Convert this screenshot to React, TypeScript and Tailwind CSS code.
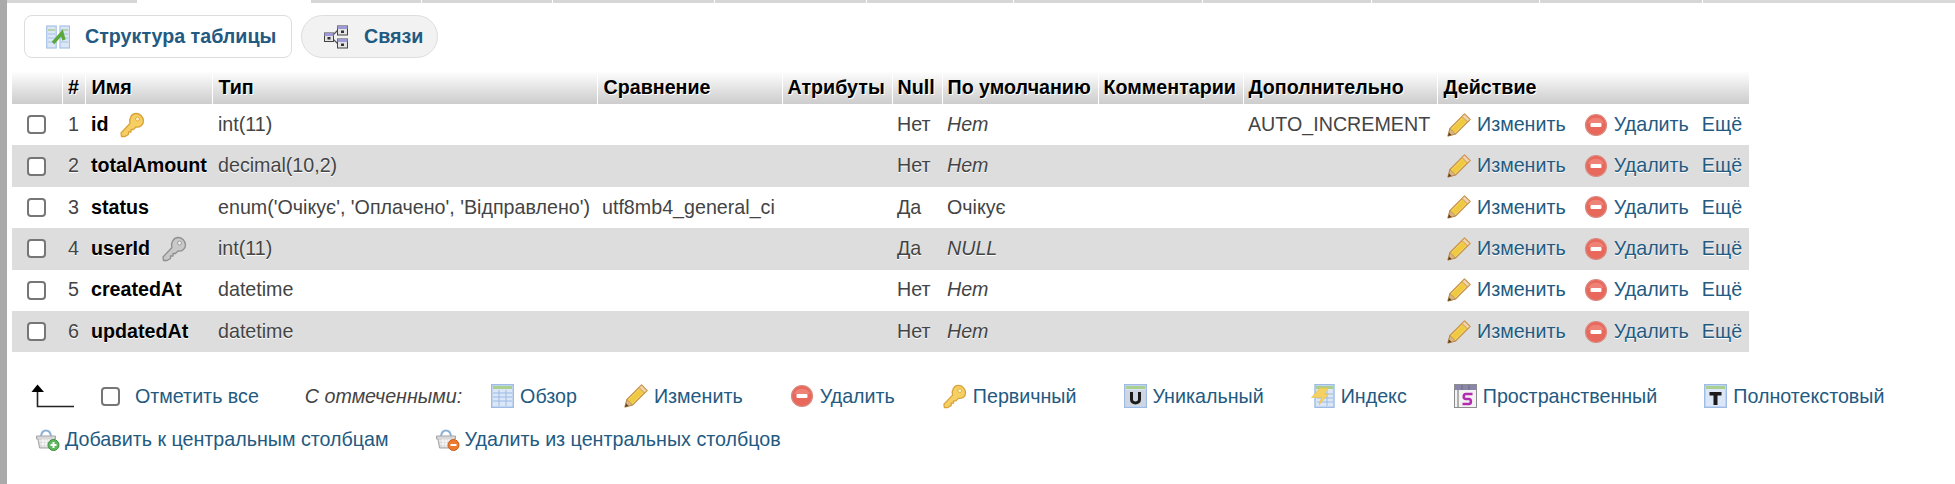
const tabs = [
  'w-[130px]',
  'w-[172px] bg-white',
  'w-[110px]',
  'w-[130px]',
  'w-[161px]',
  'w-[151px]',
  'w-[146px]',
  'w-[188px]',
  'w-[168px]',
  'w-[167px]',
  'w-[162px]',
];

type Row = {
  num: number;
  name: string;
  key?: 'primary' | 'foreign';
  type: string;
  collation?: string;
  isNull: string;
  def: string;
  defItalic: boolean;
  extra?: string;
};

const rows: Row[] = [
  { num: 1, name: 'id', key: 'primary', type: 'int(11)', isNull: 'Нет', def: 'Нет', defItalic: true, extra: 'AUTO_INCREMENT' },
  { num: 2, name: 'totalAmount', type: 'decimal(10,2)', isNull: 'Нет', def: 'Нет', defItalic: true },
  { num: 3, name: 'status', type: "enum('Очікує', 'Оплачено', 'Відправлено')", collation: 'utf8mb4_general_ci', isNull: 'Да', def: 'Очікує', defItalic: false },
  { num: 4, name: 'userId', key: 'foreign', type: 'int(11)', isNull: 'Да', def: 'NULL', defItalic: true },
  { num: 5, name: 'createdAt', type: 'datetime', isNull: 'Нет', def: 'Нет', defItalic: true },
  { num: 6, name: 'updatedAt', type: 'datetime', isNull: 'Нет', def: 'Нет', defItalic: true },
];

function PencilIcon() {
  return (
    <svg width="24" height="24" viewBox="0 0 24 24" className="shrink-0">
      <path d="M17.5 1 L23 6.5 L8.5 21 L1 23 L3 15.5 Z" fill="#f5dc6a" stroke="#c9924a" strokeWidth="1.2" strokeLinejoin="round" />
      <path d="M15.5 5 L19 8.5 L7.5 20 L4 16.5 Z" fill="#efc93f" />
      <path d="M17.5 1 L23 6.5 L20.5 9 L15 3.5 Z" fill="#f1d3ae" stroke="#c9924a" strokeWidth="1" strokeLinejoin="round" />
      <path d="M3 15.5 L8.5 21 L1 23 Z" fill="#d9b583" stroke="#a8773f" strokeWidth="0.6" />
      <path d="M2 19.5 L4.5 22 L1 23 Z" fill="#5a3d20" />
    </svg>
  );
}

function DeleteIcon() {
  return (
    <svg width="24" height="24" viewBox="0 0 24 24" className="shrink-0">
      <circle cx="12" cy="12" r="10.5" fill="#e8685c" stroke="#d98b82" strokeWidth="1.2" />
      <path d="M4 10 A 8.5 8 0 0 1 20 10 Z" fill="#ee8277" />
      <rect x="6.5" y="10" width="11" height="4" rx="1" fill="#fff" />
    </svg>
  );
}

function KeyIcon({ gray = false, size = 26 }: { gray?: boolean; size?: number }) {
  const fill = gray ? '#c9c9c9' : '#f6cf63';
  const line = gray ? '#8f8f8f' : '#d9a238';
  return (
    <svg width={size} height={size} viewBox="0 0 26 26" className="shrink-0">
      <path
        d="M17 1.5 C21 1.5 24.5 5 24.5 9 C24.5 13 21 15.5 17 15 L14.5 17.5 L12 17.5 L12 20 L9.5 20 L9.5 22.5 L6 24.5 L2.5 24.5 L2 21 L11 11.5 C9.5 7 12.5 1.5 17 1.5 Z"
        fill={fill}
        stroke={line}
        strokeWidth="1.3"
        strokeLinejoin="round"
      />
      <circle cx="18.5" cy="7" r="2" fill={gray ? '#eeeeee' : '#fdf0b8'} stroke={line} strokeWidth="0.8" />
    </svg>
  );
}

function SheetBase({ children }: { children?: React.ReactNode }) {
  return (
    <svg width="23" height="24" viewBox="0 0 23 24" className="shrink-0">
      <rect x="0.7" y="0.7" width="21.6" height="22.6" fill="#dbe7f7" stroke="#9dbbe4" strokeWidth="1.4" />
      <rect x="2" y="2" width="19" height="3" fill="#a9d08e" />
      {children}
    </svg>
  );
}

function BrowseIcon() {
  return (
    <SheetBase>
      <path d="M2 9 H21 M2 13 H21 M2 17 H21 M8 6 V22 M15 6 V22" stroke="#9dbbe4" strokeWidth="1" />
    </SheetBase>
  );
}

function UniqueIcon() {
  return (
    <SheetBase>
      <rect x="2" y="6" width="19" height="16" fill="#cfd6e2" />
      <path d="M7.5 8 V15.5 C7.5 20 15.5 20 15.5 15.5 V8" fill="none" stroke="#1b1b1b" strokeWidth="3" />
    </SheetBase>
  );
}

function FulltextIcon() {
  return (
    <SheetBase>
      <path d="M5.5 8 H17.5 V11.5 H13.5 V21 H9.5 V11.5 H5.5 Z" fill="#1b1b1b" />
    </SheetBase>
  );
}

function IndexIcon() {
  return (
    <svg width="24" height="24" viewBox="0 0 24 24" className="shrink-0">
      <rect x="4" y="0.7" width="19" height="22.6" fill="#dbe7f7" stroke="#9dbbe4" strokeWidth="1.4" />
      <rect x="5" y="2" width="17" height="3" fill="#a9d08e" />
      <path d="M6 10 H22 M6 14 H22 M6 18 H22 M16 6 V22" stroke="#9dbbe4" strokeWidth="1" />
      <path d="M9 4 H17 L13.5 10 H17.5 L8 21 L10.5 13.5 H0.5 Z" fill="#f4d160" stroke="#e5bd4a" strokeWidth="0.6" />
    </svg>
  );
}

function SpatialIcon() {
  return (
    <svg width="23" height="24" viewBox="0 0 23 24" className="shrink-0">
      <rect x="0.5" y="0.5" width="22" height="23" fill="#f3f3f3" stroke="#8d8d8d" />
      <rect x="1" y="1" width="21" height="5" fill="#8a86ab" />
      <path d="M8 1 V6 M15 1 V6 M4 6 V23" stroke="#6c6c6c" strokeWidth="1" />
      <path d="M18.5 10 H12 C9 10 9 15 12 15 H15 C17.5 15 17.5 20 15 20 H8.5" fill="none" stroke="#b32db0" strokeWidth="2.6" />
    </svg>
  );
}

function StructureIcon() {
  return (
    <svg width="24" height="24" viewBox="0 0 24 24" className="shrink-0">
      <rect x="0.7" y="1" width="9.5" height="22" fill="#dbe7f7" stroke="#a7c1e6" strokeWidth="1.2" />
      <rect x="14" y="1" width="9.5" height="22" fill="#dbe7f7" stroke="#a7c1e6" strokeWidth="1.2" />
      <path d="M2 5 H9 M15 5 H22" stroke="#a9d08e" strokeWidth="1.6" />
      <path d="M2 9 H9 M2 13 H9 M2 17 H9 M15 9 H22 M15 13 H22 M15 17 H22" stroke="#a7c1e6" strokeWidth="1" />
      <path d="M7 18 L16 8 L18 15" fill="none" stroke="#5aa83c" strokeWidth="3.4" />
    </svg>
  );
}

function RelationIcon() {
  return (
    <svg width="24" height="24" viewBox="0 0 24 24" className="shrink-0">
      <path d="M8 11 L14 5 M8 13 L14 19" stroke="#555" strokeWidth="1.2" />
      <rect x="0.5" y="8" width="9" height="8.5" fill="#e4e4e4" stroke="#444" />
      <rect x="0.5" y="8" width="9" height="3" fill="#9d99d6" />
      <rect x="3.5" y="12" width="3" height="2.5" fill="#333" />
      <rect x="13.5" y="1" width="10" height="9" fill="#e4e4e4" stroke="#444" />
      <rect x="13.5" y="1" width="10" height="3" fill="#9d99d6" />
      <rect x="17" y="5.5" width="3" height="2.5" fill="#333" />
      <rect x="13.5" y="14" width="10" height="9" fill="#e4e4e4" stroke="#444" />
      <rect x="13.5" y="14" width="10" height="3" fill="#9d99d6" />
      <rect x="17" y="18.5" width="3" height="2.5" fill="#333" />
    </svg>
  );
}

function BasketIcon({ add }: { add: boolean }) {
  return (
    <svg width="24" height="24" viewBox="0 0 24 24" className="shrink-0">
      <path d="M5 9 C6 1.5 14 1.5 15 9" fill="none" stroke="#8ab0d8" strokeWidth="2" />
      <path d="M0.5 9 H19.5 V12 H18 L16.5 21 H3.5 L2 12 H0.5 Z" fill="#d8d8d8" stroke="#a5a5a5" />
      <path d="M3 14 H17 M4 17 H16 M7 12 V20 M10 12 V20 M13 12 V20" stroke="#ffffff" strokeWidth="0.9" />
      <circle cx="17.5" cy="18" r="5.5" fill={add ? '#5cb85c' : '#ec7a2f'} stroke={add ? '#3d8f3d' : '#c95f1c'} />
      {add ? (
        <path d="M17.5 15 V21 M14.5 18 H20.5" stroke="#fff" strokeWidth="2" />
      ) : (
        <path d="M14.5 18 H20.5" stroke="#fff" strokeWidth="2" />
      )}
    </svg>
  );
}

function ArrowIcon() {
  return (
    <svg width="44" height="24" viewBox="0 0 44 24" className="shrink-0">
      <path d="M6.5 7 V22.5 H43" fill="none" stroke="#222" strokeWidth="1.6" />
      <path d="M0.5 8 L6.5 0.5 L13 8 Z" fill="#000" />
    </svg>
  );
}

function Check() {
  return (
    <input
      type="checkbox"
      className="appearance-none block w-[19px] h-[19px] border-2 border-[#767676] rounded-[4px] bg-white"
    />
  );
}

function Action({ icon, label }: { icon: React.ReactNode; label: string }) {
  return (
    <a className="flex items-center gap-[6px] text-[#235a81] whitespace-nowrap">
      {icon}
      <span>{label}</span>
    </a>
  );
}

const th = 'border-l border-white font-bold text-black whitespace-nowrap [text-shadow:1px_1px_0_#fff]';
const td = 'whitespace-nowrap overflow-hidden';

export default function App() {
  return (
    <div className="flex h-[484px] w-[1955px] overflow-hidden bg-white font-['Liberation_Sans',Arial,sans-serif] text-[19.68px] text-[#444]">
      <div className="w-[7px] shrink-0 bg-[#aaaaaa]" />
      <div className="flex min-w-0 flex-1 flex-col">
        <div className="flex h-[3px] shrink-0 gap-px bg-white">
          {tabs.map((t, i) => (
            <div key={i} className={`h-full ${t.includes('bg-white') ? t : t + ' bg-[#d6d6d6]'}`} />
          ))}
          <div className="h-full flex-1 bg-[#d9d9d9]" />
        </div>

        <nav className="ml-[17px] mt-[12px] flex h-[43px] shrink-0 gap-[9px] font-bold text-[#235a81]">
          <a className="flex w-[268px] items-center gap-[15px] rounded-[8px] border border-[#dddddd] bg-white pl-[21px]">
            <StructureIcon />
            <span>Структура таблицы</span>
          </a>
          <a className="flex w-[137px] items-center gap-[16px] rounded-[22px] border border-[#dddddd] bg-[#f2f2f2] pl-[22px]">
            <RelationIcon />
            <span>Связи</span>
          </a>
        </nav>

        <div className="ml-[5px] mt-[13px]">
          <table className="w-[1737px] table-fixed border-collapse">
            <colgroup>
              <col className="w-[50px]" />
              <col className="w-[23px]" />
              <col className="w-[127px]" />
              <col className="w-[385px]" />
              <col className="w-[185px]" />
              <col className="w-[110px]" />
              <col className="w-[50px]" />
              <col className="w-[156px]" />
              <col className="w-[145px]" />
              <col className="w-[194px]" />
              <col className="w-[312px]" />
            </colgroup>
            <thead>
              <tr className="h-[33px] bg-gradient-to-b from-white to-[#cccccc]">
                <th className="border-0" />
                <th className={`${th} text-center`}>#</th>
                <th className={`${th} pl-[6px] text-left`}>Имя</th>
                <th className={`${th} pl-[6px] text-left`}>Тип</th>
                <th className={`${th} pl-[6px] text-left`}>Сравнение</th>
                <th className={`${th} pl-[5px] text-left`}>Атрибуты</th>
                <th className={`${th} pl-[5px] text-left`}>Null</th>
                <th className={`${th} pl-[5px] text-left`}>По умолчанию</th>
                <th className={`${th} pl-[5px] text-left`}>Комментарии</th>
                <th className={`${th} pl-[5px] text-left`}>Дополнительно</th>
                <th className={`${th} pl-[6px] text-left`}>Действие</th>
              </tr>
            </thead>
            <tbody>
              {rows.map((r) => (
                <tr key={r.num} className="h-[41.4px] odd:bg-white even:bg-[#dddddd] even:[text-shadow:0_1px_0_#fff]">
                  <td className="pl-[15px]">
                    <Check />
                  </td>
                  <td className="text-center">{r.num}</td>
                  <td className={`${td} pl-[6px]`}>
                    <div className="flex items-center gap-[11px] font-bold text-black">
                      <span>{r.name}</span>
                      {r.key === 'primary' && <KeyIcon />}
                      {r.key === 'foreign' && <KeyIcon gray />}
                    </div>
                  </td>
                  <td className={`${td} pl-[6px]`}>{r.type}</td>
                  <td className={`${td} pl-[5px]`}>{r.collation}</td>
                  <td className={td} />
                  <td className={`${td} pl-[5px]`}>{r.isNull}</td>
                  <td className={`${td} pl-[5px] ${r.defItalic ? 'italic' : ''}`}>{r.def}</td>
                  <td className={td} />
                  <td className={`${td} pl-[5px]`}>{r.extra}</td>
                  <td className={`${td} pl-[6px]`}>
                    <div className="flex items-center pl-[4px]">
                      <Action icon={<PencilIcon />} label="Изменить" />
                      <div className="ml-[18px]">
                        <Action icon={<DeleteIcon />} label="Удалить" />
                      </div>
                      <a className="ml-[13px] text-[#235a81]">Ещё</a>
                    </div>
                  </td>
                </tr>
              ))}
            </tbody>
          </table>
        </div>

        <div className="mt-[32px] ml-[24px] flex h-[24px] items-center whitespace-nowrap">
          <ArrowIcon />
          <div className="ml-[26px]">
            <Check />
          </div>
          <a className="ml-[15px] text-[#235a81]">Отметить все</a>
          <em className="ml-[46px]">С отмеченными:</em>
          <div className="ml-[29px] flex items-center gap-[47px]">
            <Action icon={<BrowseIcon />} label="Обзор" />
            <Action icon={<PencilIcon />} label="Изменить" />
            <Action icon={<DeleteIcon />} label="Удалить" />
            <Action icon={<KeyIcon size={25} />} label="Первичный" />
            <Action icon={<UniqueIcon />} label="Уникальный" />
            <Action icon={<IndexIcon />} label="Индекс" />
            <Action icon={<SpatialIcon />} label="Пространственный" />
            <Action icon={<FulltextIcon />} label="Полнотекстовый" />
          </div>
        </div>

        <div className="mt-[19px] ml-[29px] flex h-[24px] items-center gap-[47px] whitespace-nowrap">
          <a className="flex items-center gap-[5px] text-[#235a81]">
            <BasketIcon add />
            <span>Добавить к центральным столбцам</span>
          </a>
          <a className="flex items-center gap-[5px] text-[#235a81]">
            <BasketIcon add={false} />
            <span>Удалить из центральных столбцов</span>
          </a>
        </div>
      </div>
    </div>
  );
}
